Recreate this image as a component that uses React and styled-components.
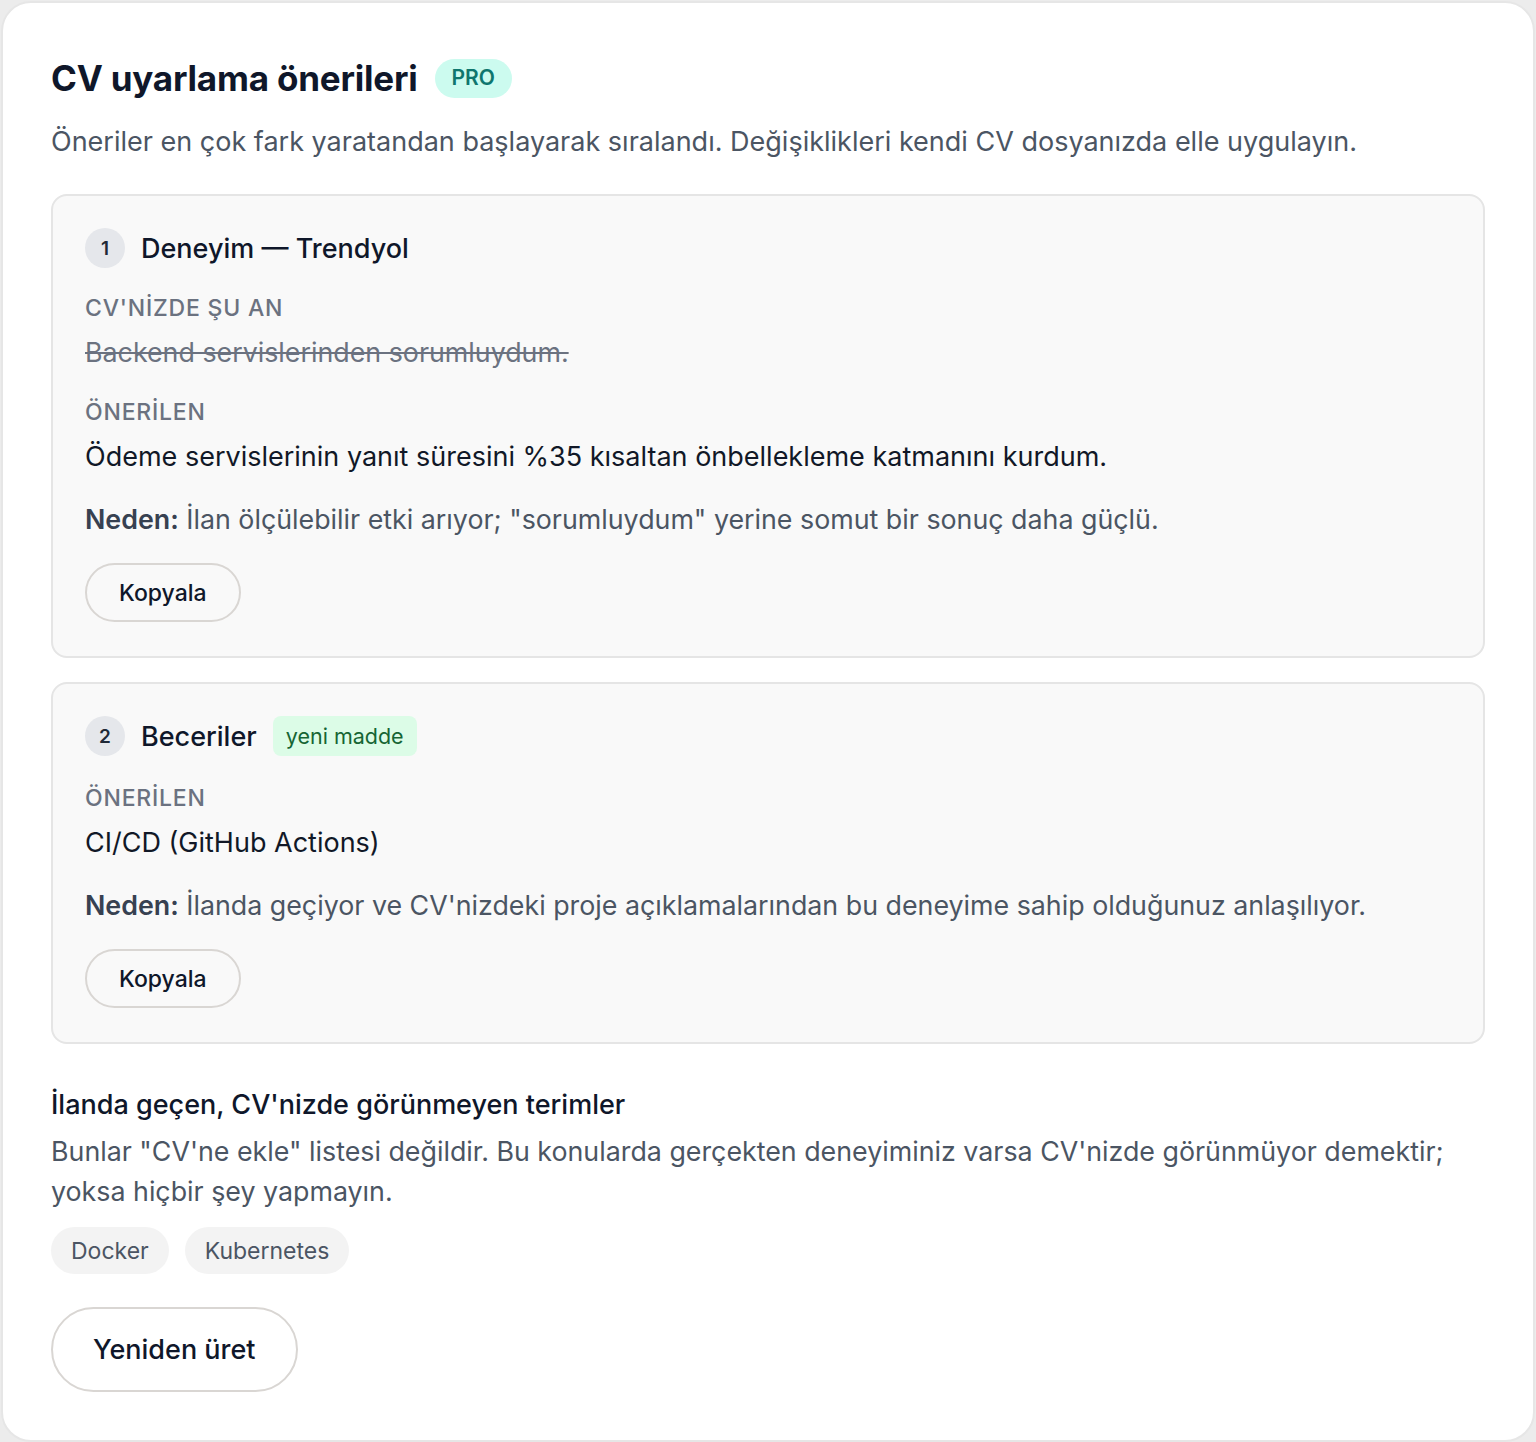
import styled, { createGlobalStyle } from "styled-components";

const GlobalStyle = createGlobalStyle`
  html, body {
    margin: 0;
    padding: 0;
    background: #ececec;
  }
  body {
    font-family: Inter, "Noto Sans", "Liberation Sans", sans-serif;
    color: #111827;
  }
  * { box-sizing: border-box; }
`;

const Panel = styled.section`
  background: #ffffff;
  border: 2px solid #e6e6e6;
  border-radius: 30px;
  margin: 1px 1px 0 1px;
  min-height: 1441px;
  padding: 51px 48px 48px;
`;

const TitleRow = styled.div`
  display: flex;
  align-items: center;
  gap: 17px;
`;

const Title = styled.h1`
  margin: 0;
  font-size: 35px;
  font-weight: 700;
  letter-spacing: -0.2px;
  color: #0f172a;
  line-height: 48px;
`;

const ProBadge = styled.span`
  background: #ccfbef;
  color: #0f766e;
  font-size: 21px;
  font-weight: 600;
  padding: 7px 17px 8px;
  border-radius: 999px;
  line-height: 24px;
`;

const Lead = styled.p`
  margin: 22px 0 0;
  font-size: 27px;
  line-height: 36px;
  color: #4b5563;
`;

const List = styled.div`
  display: flex;
  flex-direction: column;
  gap: 24px;
  margin-top: 34px;
`;

const Card = styled.div`
  background: #f9f9f9;
  border: 2px solid #e5e5e5;
  border-radius: 16px;
  padding: 32px 32px 34px;
`;

const CardHead = styled.div`
  display: flex;
  align-items: center;
  gap: 16px;
`;

const Num = styled.span`
  width: 40px;
  height: 40px;
  border-radius: 50%;
  background: #e5e7eb;
  color: #1f2937;
  font-size: 19px;
  font-weight: 600;
  display: flex;
  align-items: center;
  justify-content: center;
`;

const CardTitle = styled.h3`
  margin: 0;
  font-size: 27px;
  font-weight: 500;
  color: #0f172a;
`;

const NewTag = styled.span`
  background: #dcfce7;
  color: #166534;
  font-size: 21.5px;
  padding: 7px 13px;
  border-radius: 8px;
  line-height: 26px;
`;

const Label = styled.div`
  margin-top: ${(p) => p.$top || 24}px;
  font-size: 23px;
  font-weight: 500;
  color: #6b7280;
  letter-spacing: 0.8px;
  line-height: 32px;
`;

const OldText = styled.div`
  margin-top: 12px;
  font-size: 26.8px;
  color: #6b7280;
  text-decoration: line-through;
  line-height: 32px;
`;

const NewText = styled.div`
  margin-top: 11px;
  font-size: 27px;
  color: #111827;
  line-height: 36px;
`;

const Reason = styled.p`
  margin: 26px 0 0;
  font-size: 26.8px;
  color: #4b5563;
  line-height: 36px;

  b {
    font-weight: 600;
    color: #374151;
  }
`;

const Button = styled.button`
  display: block;
  margin-top: ${(p) => (p.$big ? 33 : 26)}px;
  font-family: inherit;
  font-size: ${(p) => (p.$big ? 27 : 23)}px;
  font-weight: 500;
  color: #0f172a;
  background: ${(p) => (p.$big ? "#ffffff" : "transparent")};
  border: 2px solid #d9d6d3;
  border-radius: 999px;
  height: ${(p) => (p.$big ? 85 : 59)}px;
  padding: 0 ${(p) => (p.$big ? 40 : 32)}px;
  cursor: pointer;
`;

const Section = styled.div`
  margin-top: 43px;
`;

const SectionTitle = styled.h4`
  margin: 0;
  font-size: 27px;
  font-weight: 500;
  color: #0f172a;
  line-height: 36px;
`;

const SectionText = styled.p`
  margin: 8px 0 0;
  font-size: 26.8px;
  line-height: 40px;
  color: #4b5563;
`;

const Chips = styled.div`
  display: flex;
  gap: 16px;
  margin-top: 16px;
`;

const Chip = styled.span`
  background: #f3f3f3;
  color: #4b5563;
  font-size: 23px;
  padding: 0 20px;
  height: 47px;
  border-radius: 999px;
  display: flex;
  align-items: center;
`;

const suggestions = [
  {
    n: 1,
    title: "Deneyim — Trendyol",
    old: "Backend servislerinden sorumluydum.",
    next: "Ödeme servislerinin yanıt süresini %35 kısaltan önbellekleme katmanını kurdum.",
    why: 'İlan ölçülebilir etki arıyor; "sorumluydum" yerine somut bir sonuç daha güçlü.',
  },
  {
    n: 2,
    title: "Beceriler",
    tag: "yeni madde",
    next: "CI/CD (GitHub Actions)",
    why: "İlanda geçiyor ve CV'nizdeki proje açıklamalarından bu deneyime sahip olduğunuz anlaşılıyor.",
  },
];

export default function App() {
  return (
    <>
      <GlobalStyle />
      <Panel>
        <TitleRow>
          <Title>CV uyarlama önerileri</Title>
          <ProBadge>PRO</ProBadge>
        </TitleRow>
        <Lead>
          Öneriler en çok fark yaratandan başlayarak sıralandı. Değişiklikleri kendi CV dosyanızda elle uygulayın.
        </Lead>

        <List>
          {suggestions.map((s) => (
            <Card key={s.n}>
              <CardHead>
                <Num>{s.n}</Num>
                <CardTitle>{s.title}</CardTitle>
                {s.tag && <NewTag>{s.tag}</NewTag>}
              </CardHead>
              {s.old && (
                <>
                  <Label $top={24}>CV'NİZDE ŞU AN</Label>
                  <OldText>{s.old}</OldText>
                </>
              )}
              <Label $top={s.old ? 28 : 26}>ÖNERİLEN</Label>
              <NewText>{s.next}</NewText>
              <Reason>
                <b>Neden:</b> {s.why}
              </Reason>
              <Button>Kopyala</Button>
            </Card>
          ))}
        </List>

        <Section>
          <SectionTitle>İlanda geçen, CV'nizde görünmeyen terimler</SectionTitle>
          <SectionText>
            Bunlar "CV'ne ekle" listesi değildir. Bu konularda gerçekten deneyiminiz varsa CV'nizde görünmüyor demektir; yoksa hiçbir şey yapmayın.
          </SectionText>
          <Chips>
            <Chip>Docker</Chip>
            <Chip>Kubernetes</Chip>
          </Chips>
          <Button $big>Yeniden üret</Button>
        </Section>
      </Panel>
    </>
  );
}
